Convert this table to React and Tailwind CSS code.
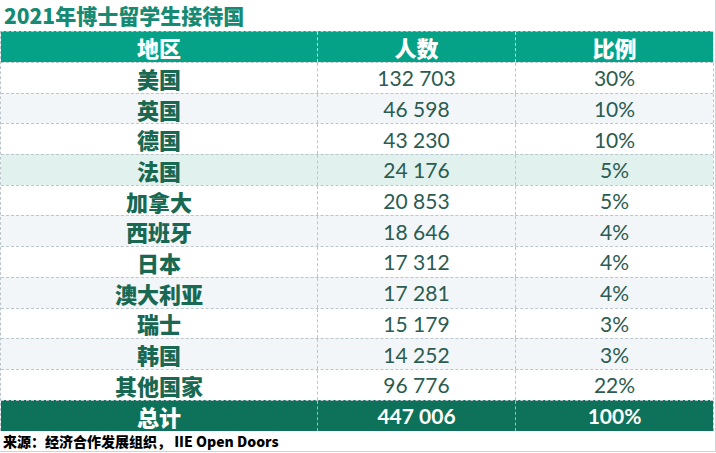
import React from 'react';

const rows = [
  { name: '美国', count: '132 703', pct: '30%', bg: 'bg-white' },
  { name: '英国', count: '46 598', pct: '10%', bg: 'bg-[#f2f6f9]' },
  { name: '德国', count: '43 230', pct: '10%', bg: 'bg-white' },
  { name: '法国', count: '24 176', pct: '5%', bg: 'bg-[#e1f1ed]' },
  { name: '加拿大', count: '20 853', pct: '5%', bg: 'bg-white' },
  { name: '西班牙', count: '18 646', pct: '4%', bg: 'bg-[#f2f6f9]' },
  { name: '日本', count: '17 312', pct: '4%', bg: 'bg-white' },
  { name: '澳大利亚', count: '17 281', pct: '4%', bg: 'bg-[#f2f6f9]' },
  { name: '瑞士', count: '15 179', pct: '3%', bg: 'bg-white' },
  { name: '韩国', count: '14 252', pct: '3%', bg: 'bg-[#f2f6f9]' },
  { name: '其他国家', count: '96 776', pct: '22%', bg: 'bg-white' },
];

const cjk = "font-['Noto_Sans_CJK_SC',sans-serif]";
const num = "font-['Lato','Noto_Sans',sans-serif]";

export default function App() {
  return (
    <div className="w-[716px] h-[452px] bg-white border-r border-b border-[#cdd3d6] flex flex-col overflow-hidden">
      <div className={`h-[31px] flex items-center pl-[4px] text-[21px] font-black text-[#168a72] leading-none ${cjk}`}>
        2021年博士留学生接待国
      </div>

      <div className="w-[713px] border-l border-dashed border-[#b9c6cd]">
        <div className="grid grid-cols-[317px_198px_198px] h-[31px] bg-[#05a287] text-white font-black text-[22px] leading-none border-t border-dashed border-[#8fd6c8]">
          <div className={`flex items-center justify-center border-r border-dashed border-[#bfe9e0] ${cjk}`}>地区</div>
          <div className={`flex items-center justify-center border-r border-dashed border-[#bfe9e0] ${cjk}`}>人数</div>
          <div className={`flex items-center justify-center border-r border-dashed border-[#bfe9e0] ${cjk}`}>比例</div>
        </div>

        {rows.map(r => (
          <div key={r.name} className={`grid grid-cols-[317px_198px_198px] h-[30.7px] border-t border-dashed border-[#b9c6cd] ${r.bg}`}>
            <div className={`flex items-center justify-center border-r border-dashed border-[#b9c6cd] text-[22px] font-black text-[#196852] leading-none ${cjk}`}>{r.name}</div>
            <div className={`flex items-center justify-center border-r border-dashed border-[#b9c6cd] text-[21px] text-[#2a5c52] leading-none ${num}`}>{r.count}</div>
            <div className={`flex items-center justify-center border-r border-dashed border-[#b9c6cd] text-[21px] text-[#2a5c52] leading-none ${num}`}>{r.pct}</div>
          </div>
        ))}

        <div className="grid grid-cols-[317px_198px_198px] h-[31px] bg-[#0e725a] text-white leading-none border-t border-dashed border-[#b9c6cd]">
          <div className={`flex items-center justify-center border-r border-dashed border-[#8fc7b8] text-[22px] font-black ${cjk}`}>总计</div>
          <div className={`flex items-center justify-center border-r border-dashed border-[#8fc7b8] text-[21px] font-bold ${num}`}>447 006</div>
          <div className={`flex items-center justify-center border-r border-dashed border-[#8fc7b8] text-[21px] font-bold ${num}`}>100%</div>
        </div>
      </div>

      <div className={`h-[20px] flex items-center pl-[3px] text-[14px] font-black text-black leading-none ${cjk}`}>
        来源：经济合作发展组织， IIE Open Doors
      </div>
    </div>
  );
}
